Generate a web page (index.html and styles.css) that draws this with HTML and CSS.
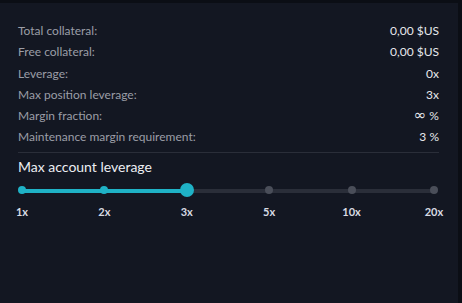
FILE: index.html
```html
<!DOCTYPE html>
<html lang="en">
<head>
<meta charset="UTF-8" />
<title>Account</title>
<link rel="stylesheet" href="styles.css">
</head>
<body>
<section class="panel">
  <div class="stats">
    <div class="row"><span class="label">Total collateral:</span><span class="value">0,00 $US</span></div>
    <div class="row"><span class="label">Free collateral:</span><span class="value">0,00 $US</span></div>
    <div class="row"><span class="label">Leverage:</span><span class="value">0x</span></div>
    <div class="row"><span class="label">Max position leverage:</span><span class="value">3x</span></div>
    <div class="row"><span class="label">Margin fraction:</span><span class="value"><span class="inf">∞</span> %</span></div>
    <div class="row"><span class="label">Maintenance margin requirement:</span><span class="value">3 %</span></div>
  </div>

  <h2>Max account leverage</h2>

  <div class="slider">
    <div class="track"><div class="fill"></div></div>
    <div class="dots">
      <span class="dot on"></span>
      <span class="dot on"></span>
      <span class="dot handle"></span>
      <span class="dot"></span>
      <span class="dot"></span>
      <span class="dot"></span>
    </div>
  </div>
  <div class="marks">
    <span>1x</span><span>2x</span><span>3x</span><span>5x</span><span>10x</span><span>20x</span>
  </div>
</section>
</body>
</html>
```

FILE: styles.css
```css
body {
  margin: 0;
  background: #0b0e15;
  font-family: Lato, "Open Sans", sans-serif;
  width: 462px;
  height: 303px;
  overflow: hidden;
}

.panel {
  margin-top: 3px;
  width: 458px;
  height: 300px;
  background: #131722;
  box-sizing: border-box;
  padding: 17px 19px 0 18px;
}

.stats {
  border-bottom: 1px solid #2a2e39;
  padding-bottom: 4px;
}

.row {
  display: flex;
  justify-content: space-between;
  font-size: 12px;
  line-height: 21.3px;
}

.label {
  color: #9b9ea7;
}

.value {
  color: #e6e8ec;
}

.inf {
  font-family: "DejaVu Sans", sans-serif;
  font-size: 15px;
  line-height: 10px;
}

h2 {
  margin: 4px 0 0;
  font-size: 14px;
  font-weight: 400;
  line-height: 20px;
  color: #eceef2;
}

.slider {
  position: relative;
  margin: 7px 1px 0 0;
  height: 13px;
}

.track {
  position: absolute;
  left: 4px;
  right: 4px;
  top: 5px;
  height: 4px;
  background: #2a2e39;
  border-radius: 2px;
}

.fill {
  width: 40%;
  height: 100%;
  background: #1fb2c6;
  border-radius: 2px;
}

.dots {
  position: relative;
  display: flex;
  justify-content: space-between;
  align-items: center;
  height: 13px;
}

.dot {
  width: 8px;
  height: 8px;
  border-radius: 50%;
  background: #4a4e59;
}

.dot.on {
  background: #1fb2c6;
}

.dot.handle {
  width: 14px;
  height: 14px;
  margin: 0 -3px;
  background: #1fb2c6;
}

.marks {
  display: flex;
  justify-content: space-between;
  margin: 8px 5px 0 4px;
  font-size: 11px;
  font-weight: 700;
  color: #d8dbe2;
  line-height: 14px;
}

.marks span {
  width: 0;
  display: flex;
  justify-content: center;
  white-space: nowrap;
}
```
